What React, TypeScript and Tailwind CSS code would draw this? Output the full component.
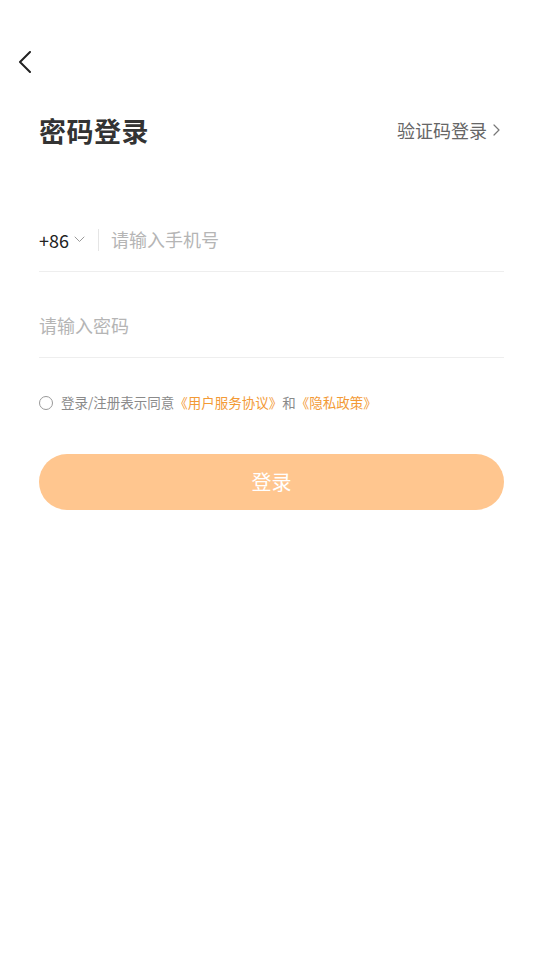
import { useState } from "react";

const FONT = "font-['Noto_Sans_CJK_SC','Noto_Sans',sans-serif]";

export default function App() {
  const [agreed, setAgreed] = useState(false);

  return (
    <div className={`min-h-[955px] w-full bg-white ${FONT}`}>
      {/* Top bar */}
      <div className="h-[102px] pt-[51px] pl-[17px]">
        <button className="w-[16px] h-[22px] flex items-center justify-center">
          <svg width="14" height="22" viewBox="0 0 14 22" fill="none">
            <path d="M12 1 L2 11 L12 21" stroke="#222" strokeWidth="2" strokeLinecap="round" strokeLinejoin="round" />
          </svg>
        </button>
      </div>

      <div className="px-[39px]">
        {/* Header */}
        <div className="flex items-center justify-between h-[56px]">
          <h1 className="text-[27px] font-bold text-[#333] leading-none tracking-[0.5px]">密码登录</h1>
          <button className="flex items-center gap-[6px] text-[18px] text-[#666] leading-none mr-[4px]">
            验证码登录
            <svg width="7" height="12" viewBox="0 0 7 12" fill="none">
              <path d="M1 1 L6 6 L1 11" stroke="#777" strokeWidth="1.2" strokeLinecap="round" strokeLinejoin="round" />
            </svg>
          </button>
        </div>

        {/* Phone */}
        <div className="mt-[50px] h-[64px] flex items-center border-b border-[#eeeeee]">
          <div className="flex items-center gap-[5px]">
            <span className="text-[18px] text-[#222] leading-none">+86</span>
            <svg width="11" height="7" viewBox="0 0 11 7" fill="none">
              <path d="M1 1 L5.5 5.5 L10 1" stroke="#999" strokeWidth="1" strokeLinecap="round" strokeLinejoin="round" />
            </svg>
          </div>
          <div className="w-px h-[22px] bg-[#e5e5e5] ml-[13px] mr-[12px]" />
          <input
            className="flex-1 outline-none text-[18px] text-[#333] placeholder:text-[#b5b5b5] bg-transparent"
            placeholder="请输入手机号"
          />
        </div>

        {/* Password */}
        <div className="h-[86px] flex items-center border-b border-[#eeeeee] pt-[22px]">
          <input
            type="password"
            className="flex-1 outline-none text-[18px] text-[#333] placeholder:text-[#b5b5b5] bg-transparent"
            placeholder="请输入密码"
          />
        </div>

        {/* Agreement */}
        <div className="mt-[38px] flex items-center gap-[8px] text-[13.5px] leading-none">
          <button
            onClick={() => setAgreed(!agreed)}
            className={`w-[14px] h-[14px] rounded-full border ${agreed ? "border-[#f39a36] bg-[#f39a36]" : "border-[#999]"}`}
          />
          <p className="text-[#8a8a8a]">
            登录/注册表示同意<span className="text-[#f39a36]">《用户服务协议》</span>和<span className="text-[#f39a36]">《隐私政策》</span>
          </p>
        </div>

        {/* Submit */}
        <button className="mt-[44px] w-full h-[56px] rounded-full bg-[#ffc68f] text-white text-[20px]">
          登录
        </button>
      </div>
    </div>
  );
}
